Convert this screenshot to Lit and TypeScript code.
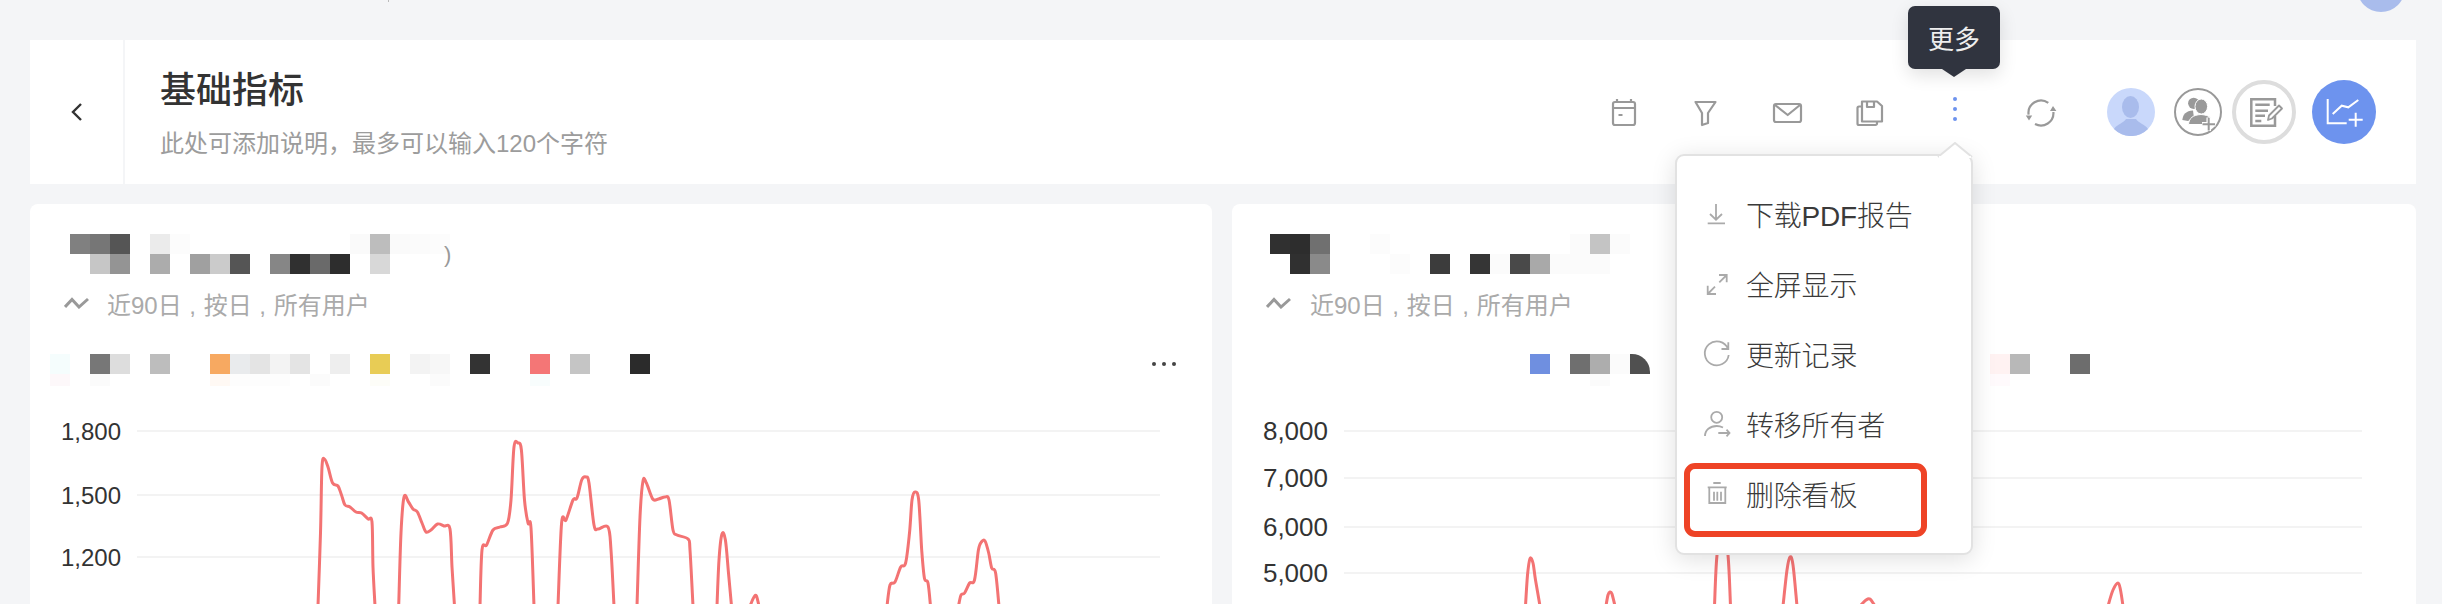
import { LitElement, html, css, svg } from "lit";
import { customElement } from "lit/decorators.js";

type Pt = [number, number];

function smooth(p: Pt[]): string {
  let d = `M${p[0][0]} ${p[0][1]}`;
  for (let i = 0; i < p.length - 1; i++) {
    const a = p[Math.max(0, i - 1)], b = p[i], c = p[i + 1], e = p[Math.min(p.length - 1, i + 2)];
    const c1x = b[0] + (c[0] - a[0]) / 6, c1y = b[1] + (c[1] - a[1]) / 6;
    const c2x = c[0] - (e[0] - b[0]) / 6, c2y = c[1] - (e[1] - b[1]) / 6;
    d += `C${c1x.toFixed(1)} ${c1y.toFixed(1)} ${c2x.toFixed(1)} ${c2y.toFixed(1)} ${c[0]} ${c[1]}`;
  }
  return d;
}

const leftPeaks: Pt[][] = [
  [[318,606],[320.5,533],[322,467],[324.5,459],[328,467],[332.6,483],[338,486],[341.5,495],[345,505],[350,507],[356,512],[361.6,513],[368,519],[372,522],[373,567],[375,606]],
  [[398.7,606],[401,533],[404,497],[408.5,502],[413,509],[417.4,512],[422,523],[426,532],[431,530],[437.5,524],[444,526],[450,529],[452,567],[454.5,606]],
  [[480,606],[482,550],[486.6,545],[493,530],[500,527],[507.6,523],[511,500],[514,447],[518,443],[521.4,450],[524.5,500],[528,523],[531,528],[534,606]],
  [[558,606],[561.6,523],[566,520],[573,500],[577,498],[581.7,480],[586,477],[589,483],[594,525],[598,529],[608,527],[611,550],[614,606]],
  [[637,606],[640,517],[643,481],[646.4,483],[652.7,499],[658.5,499],[665,497],[669,500],[673,530],[677,535],[688,539],[690,550],[693,606]],
  [[717,606],[719,560],[722,534],[725.4,540],[728.5,573],[731.5,606]],
  [[750,606],[754,597],[756.4,596],[759,606]],
  [[887,606],[890,585],[895,582],[900.7,567],[905.6,563],[909.5,533],[912,500],[915,492],[918.7,500],[921.7,550],[924.4,578],[928,583],[930.5,606]],
  [[958.5,606],[961,595],[964.6,593],[969.6,583],[974.5,580],[978.4,550],[981.4,542],[985,541],[988.7,553],[991.7,568],[995.6,573],[999,606]],
];

const rightPeaks: Pt[][] = [
  [[1525.5,606],[1527.5,575],[1530,558.5],[1533,563],[1535.5,580],[1540,606]],
  [[1606,606],[1608,595],[1610,592],[1612,594],[1615,606]],
  [[1714.5,606],[1717,555],[1723,520],[1728,555],[1730.5,606]],
  [[1783,606],[1787,570],[1790,557],[1793,565],[1797,606]],
  [[1860,606],[1866,600],[1870,599],[1875,606]],
  [[2108,606],[2113,590],[2118,583],[2120.5,590],[2123,606]],
];

interface Axis { label: string; y: number }
const leftAxis: Axis[] = [{ label: "1,800", y: 431 }, { label: "1,500", y: 495 }, { label: "1,200", y: 557 }];
const rightAxis: Axis[] = [{ label: "8,000", y: 431 }, { label: "7,000", y: 478 }, { label: "6,000", y: 527 }, { label: "5,000", y: 573 }];

/* Mosaic cells (20px wide): column index -> colour */
type Cells = Record<number, string>;
const titleA: Cells[] = [
  { 0: "#808080", 1: "#767676", 2: "#555555", 4: "#ebebeb", 5: "#fcfcfc", 14: "#fafafa", 15: "#bdbdbd", 16: "#fafafa", 17: "#fbfbfb", 18: "#fcfcfc" },
  { 1: "#c6c6c6", 2: "#949494", 4: "#acacac", 6: "#a0a0a0", 7: "#cbcbcb", 8: "#555555", 10: "#868686", 11: "#303030", 12: "#6a6a6a", 13: "#2d2d2d", 15: "#d8d8d8" },
];
const titleB: Cells[] = [
  { 0: "#303030", 1: "#2d2d2d", 2: "#707070", 5: "#fcfcfc", 15: "#fbfbfb", 16: "#c4c4c4", 17: "#fbfbfb" },
  { 1: "#303030", 2: "#8a8a8a", 6: "#fcfcfc", 8: "#3c3c3c", 10: "#353535", 11: "#fbfbfb", 12: "#494949", 13: "#a9a9a9", 14: "#fbfbfb", 15: "#fbfbfb", 16: "#fbfbfb" },
];
const legendA: Cells[] = [
  { 0: "#f5fdfd", 2: "#777777", 3: "#dddddd", 5: "#bdbdbd", 8: "#f7a961", 9: "#e9ebed", 10: "#e4e4e4", 11: "#f3f3f3", 12: "#e4e4e4", 14: "#eeeeee", 16: "#e8cc55", 18: "#f3f3f3", 19: "#f7f7f7", 21: "#333333", 24: "#f47676", 26: "#c5c5c5", 29: "#2b2b2b" },
  { 0: "#fdf8fa", 2: "#fbfbfb", 8: "#fff9f4", 9: "#fdfdfd", 10: "#fdfdfd", 11: "#fdfdfd", 13: "#fbfbfb", 16: "#fdfdf8", 19: "#fbfbfb", 24: "#f8fdfd" },
];
const legendB: Cells[] = [
  { 0: "#6f8fe0", 2: "#6f6f6f", 3: "#adadad", 4: "#fbfbfb", 5: "#505050", 23: "#fff2f2", 24: "#b8b8b8", 27: "#6d6d6d" },
  { 3: "#fbfbfb", 23: "#fffafc" },
];

const toolbarIcons = [
  svg`<rect x="10" y="10" width="22" height="23" rx="2"/><path d="M14 7v3M28 7v3M10 16h22M15.5 23h4"/>`,
  svg`<path d="M10.5 10H30.5L23 21V31L17 33V21Z"/>`,
  svg`<rect x="7" y="12" width="27" height="18" rx="2"/><path d="M8 13L20.7 23L33 13"/>`,
  svg`<path d="M13 9.5H28L33 14V29.5H13ZM18 9.5V15H25V9.5M13 14.5H10A1.5 1.5 0 0 0 8.5 16V31.5A1.5 1.5 0 0 0 10 33H26.5A1.5 1.5 0 0 0 28 31.5V29.5"/>`,
];

const menu = [
  { label: "下载PDF报告", icon: svg`<path d="M15 6V21M9 16L15 21.7L21 16M6.7 25.3H24"/>` },
  { label: "全屏显示", icon: svg`<path d="M18 7H25.7V14.3M25.7 7L18.3 14.3M6.7 17.7V26H15M6.7 26L14 18.7"/>` },
  { label: "更新记录", icon: svg`<path d="M27.3 4.3V11H20.5M27 11A12 12 0 1 0 27.7 17"/>` },
  { label: "转移所有者", icon: svg`<circle cx="15.7" cy="9.3" r="5.5"/><path d="M4 28C4 22 9 18 15.7 18C18 18 20 18.5 22 19.5M17.3 25H28.3M25.5 21.7L28.5 25L25.5 28.3"/>` },
  { label: "删除看板", icon: svg`<path d="M6.7 9.3H25.7M12.3 5H19.7M8.3 9.3V25H24.3V9.3M13 13.7V22.7M16.3 13.7V22.7M20 13.7V22.7"/>` },
];

@customElement("app-root")
export class AppRoot extends LitElement {
  static styles = css`
    :host {
      display: block;
      position: relative;
      width: 2442px;
      height: 604px;
      overflow: hidden;
      background: #f4f5f7;
      font-family: "Liberation Sans", "Noto Sans CJK SC", sans-serif;
      color: #333333;
    }
    .page { padding: 40px 26px 0 30px; }
    .header {
      height: 144px;
      display: flex;
      align-items: center;
      background: #ffffff;
      padding-right: 40px;
      margin-bottom: 20px;
    }
    .back {
      width: 93px;
      height: 100%;
      flex: none;
      display: flex;
      align-items: center;
      justify-content: center;
      border-right: 2px solid #f4f5f7;
    }
    .back svg { width: 14px; height: 20px; fill: none; stroke: #333333; stroke-width: 2.4; }
    .heading { padding: 3px 0 0 35px; flex: 1; }
    .heading h1 {
      margin: 0;
      font-size: 36px;
      line-height: 50px;
      font-weight: 500;
      color: #333333;
    }
    .heading p {
      margin: 11px 0 0;
      font-size: 24px;
      line-height: 34px;
      color: #9c9c9c;
    }
    .tools { display: flex; align-items: center; gap: 42px; }
    .tool { width: 40px; height: 40px; fill: none; stroke: #999999; stroke-width: 2.2; stroke-linejoin: round; flex: none; display: block; }
    .tool.after { margin-left: 4px; }
    .dots { fill: #6d93ee; stroke: none; }
    .refresh-fill { fill: #999999; stroke: none; }
    .actions { display: flex; align-items: center; margin-left: 46px; }
    .actions svg { display: block; flex: none; }
    .a48 { width: 48px; height: 48px; }
    .a64 { width: 64px; height: 64px; }
    .ml19 { margin-left: 19px; }
    .ml10 { margin-left: 10px; }
    .ml16 { margin-left: 16px; }

    .cards { display: grid; grid-template-columns: 1182px 1184px; gap: 20px; }
    .card {
      height: 420px;
      background: #ffffff;
      border-radius: 8px;
      padding-top: 30px;
      box-sizing: border-box;
      overflow: hidden;
    }
    .mosaic { position: relative; height: 40px; }
    .a .mosaic { margin-left: 40px; }
    .b .mosaic { margin-left: 38px; }
    .m-row { display: flex; height: 20px; }
    .cell { width: 20px; height: 100%; flex: none; display: block; }
    .paren {
      position: absolute;
      left: 374px;
      top: 3px;
      font-size: 22px;
      line-height: 36px;
      color: #999999;
    }
    .sub {
      display: flex;
      align-items: center;
      height: 30px;
      margin: 14px 0 0 34px;
      font-size: 24px;
      color: #aaaaaa;
      white-space: pre;
      word-spacing: 1px;
    }
    .sub svg { width: 25px; height: 12px; fill: none; stroke: #999999; stroke-width: 3; margin-right: 18px; flex: none; }
    .b .sub svg { margin-right: 19px; }
    .legend {
      display: flex;
      justify-content: space-between;
      align-items: flex-start;
      height: 40px;
      margin-top: 36px;
      padding-right: 35px;
    }
    .a .legend { padding-left: 20px; }
    .b .legend { padding-left: 298px; }
    .legend .m-row:last-child { height: 12px; }
    .b .legend .m-row:first-child .cell:nth-child(6) { border-top-right-radius: 18px; }
    .ell { width: 26px; height: 20px; fill: #444444; display: block; }
    .chart { display: block; width: 100%; height: 210px; }
    .grid { stroke: #f3f3f3; stroke-width: 2; }
    .series { fill: none; stroke: #f37373; stroke-width: 3; stroke-linejoin: round; }
    .tick { font-size: 24px; fill: #333333; text-anchor: end; dominant-baseline: central; }
    .b .tick { font-size: 26px; }

    .tooltip {
      position: absolute;
      left: 1908px;
      top: 6px;
      width: 92px;
      height: 63px;
      border-radius: 7px;
      background: #30343f;
      color: #eeeeee;
      font-size: 26px;
      display: flex;
      align-items: center;
      justify-content: center;
      box-shadow: 0 6px 18px rgba(0, 0, 0, 0.12);
    }
    .tooltip::after {
      content: "";
      position: absolute;
      left: 34px;
      top: 63px;
      border-left: 12px solid transparent;
      border-right: 12px solid transparent;
      border-top: 8px solid #30343f;
    }
    .popup {
      position: absolute;
      left: 1675px;
      top: 154px;
      width: 298px;
      height: 401px;
      box-sizing: border-box;
      padding: 23px 0;
      background: #ffffff;
      border: 2px solid #e2e2e2;
      border-radius: 9px;
      box-shadow: 0 4px 24px rgba(0, 0, 0, 0.13);
    }
    .caret {
      position: absolute;
      left: 260px;
      top: -14px;
      width: 36px;
      height: 16px;
      fill: #ffffff;
      stroke: #e2e2e2;
      stroke-width: 2;
    }
    .item {
      height: 70px;
      display: flex;
      align-items: center;
      padding-left: 24px;
      font-size: 28px;
      font-weight: 300;
      color: #3a3a3a;
      letter-spacing: -0.2px;
    }
    .item svg { width: 32px; height: 32px; margin-right: 13px; fill: none; stroke: #aaaaaa; stroke-width: 1.8; flex: none; }
    .mark {
      position: absolute;
      left: 7px;
      top: 307px;
      width: 243px;
      height: 74px;
      box-sizing: border-box;
      border: 6px solid #ee4326;
      border-radius: 11px;
    }
    .corner-avatar {
      position: absolute;
      left: 2357px;
      top: -36px;
      width: 48px;
      height: 48px;
      border-radius: 50%;
      background: #a9bcec;
    }
    .top-tick {
      position: absolute;
      left: 388px;
      top: 0;
      width: 1px;
      height: 2px;
      background: #bbbbbb;
    }
  `;

  private cells(rows: Cells[]) {
    return rows.map((r) => {
      const max = Math.max(...Object.keys(r).map(Number));
      const list = Array.from({ length: max + 1 }, (_, i) => r[i] ?? "transparent");
      return html`<div class="m-row">${list.map((c) => html`<i class="cell" style="background:${c}"></i>`)}</div>`;
    });
  }

  private chart(left: number, width: number, x1: number, x2: number, labelX: number, axis: Axis[], peaks: Pt[][]) {
    return html`<svg class="chart" viewBox="${left} 394 ${width} 210">
      ${axis.map((a) => svg`
        <line class="grid" x1=${x1} x2=${x2} y1=${a.y} y2=${a.y}></line>
        <text class="tick" x=${labelX} y=${a.y}>${a.label}</text>`)}
      ${peaks.map((p) => svg`<path class="series" d=${smooth(p)}></path>`)}
    </svg>`;
  }

  private card(kind: "a" | "b") {
    const a = kind === "a";
    return html`<section class="card ${kind}">
      <div class="mosaic">
        ${this.cells(a ? titleA : titleB)}
        ${a ? html`<span class="paren">)</span>` : ""}
      </div>
      <div class="sub">
        <svg viewBox="0 0 25 12"><path d="M1 10L8 2.5L15 10L24 2"/></svg>
        <span>近90日 , 按日 , 所有用户</span>
      </div>
      <div class="legend">
        <div>${this.cells(a ? legendA : legendB)}</div>
        ${a ? html`<svg class="ell" viewBox="0 0 26 20"><circle cx="3" cy="10" r="2"/><circle cx="13" cy="10" r="2"/><circle cx="23" cy="10" r="2"/></svg>` : ""}
      </div>
      ${a
        ? this.chart(30, 1182, 137, 1160, 121, leftAxis, leftPeaks)
        : this.chart(1232, 1184, 1344, 2362, 1328, rightAxis, rightPeaks)}
    </section>`;
  }

  render() {
    return html`
      <div class="page">
        <header class="header">
          <div class="back"><svg viewBox="0 0 14 20"><path d="M11 2L3 10L11 18"/></svg></div>
          <div class="heading">
            <h1>基础指标</h1>
            <p>此处可添加说明，最多可以输入120个字符</p>
          </div>
          <div class="tools">
            ${toolbarIcons.map((i) => html`<svg class="tool" viewBox="0 0 40 40">${i}</svg>`)}
            <svg class="tool after" viewBox="0 0 40 40"><g class="dots"><circle cx="20" cy="7" r="2"/><circle cx="20" cy="17" r="2"/><circle cx="20" cy="27" r="2"/></g></svg>
            <svg class="tool after" viewBox="0 0 40 40">
              <path d="M27.3 10.9A12.5 12.5 0 0 0 7.6 22.7M32.4 20A12.5 12.5 0 0 1 14 32"/>
              <path class="refresh-fill" d="M4.8 23.5H11.2L8 28.5ZM29 19H35.4L32 14Z"/>
            </svg>
          </div>
          <div class="actions">
            <svg class="a48" viewBox="0 0 48 48">
              <circle cx="24" cy="24" r="24" fill="#c9d8fb"/>
              <ellipse cx="23.5" cy="19" rx="8.5" ry="11" fill="#a9bcec"/>
              <path d="M7 41C10 36 17 35 19 31L29 31C31 35 38 36 41 41A24 24 0 0 1 7 41Z" fill="#a9bcec"/>
            </svg>
            <svg class="a48 ml19" viewBox="0 0 48 48">
              <circle cx="24" cy="24" r="23" fill="#ffffff" stroke="#999999" stroke-width="2"/>
              <circle cx="19.7" cy="15.3" r="5.6" fill="#999999"/>
              <path d="M8.3 32C9 26 12 23 19 22.5L20 30L14 33Z" fill="#999999"/>
              <ellipse cx="27.3" cy="18.5" rx="6.3" ry="7.5" stroke="#ffffff" stroke-width="1" fill="#999999"/>
              <path d="M14.5 36.5C15 30 19 27 27 26.5C33 27 36 28.5 37 31L30 36.5Z" fill="#999999" stroke="#ffffff" stroke-width="1"/>
              <path d="M34.7 29.5V43M28 36.3H41.5" stroke="#ffffff" stroke-width="4.5"/>
              <path d="M34.7 30V42.5M28.5 36.3H41" stroke="#999999" stroke-width="2"/>
            </svg>
            <svg class="a64 ml10" viewBox="0 0 64 64">
              <circle cx="32" cy="32" r="30" fill="#ffffff" stroke="#dddddd" stroke-width="4"/>
              <path d="M43 26V19.2H19.3V45.7H43V36" fill="none" stroke="#999999" stroke-width="2.5"/>
              <path d="M23.3 24.7H37.7M23.3 30.7H36M23.3 35.7H33M23.3 41H29.3" fill="none" stroke="#999999" stroke-width="2.4"/>
              <path d="M47 25.5L50 28.5L40 38.5L36 40L37 35.5Z" fill="#ffffff" stroke="#999999" stroke-width="1.8" stroke-linejoin="round"/>
            </svg>
            <svg class="a64 ml16" viewBox="0 0 64 64">
              <circle cx="32" cy="32" r="32" fill="#6d93ee"/>
              <path d="M15.7 19V43.3H34.7M20.7 34L29.7 25.7L36.3 27.3L46.3 20M36.7 39.7H50.7M43.7 32.7V46.7" fill="none" stroke="#ffffff" stroke-width="2"/>
            </svg>
          </div>
        </header>
        <div class="cards">
          ${this.card("a")}
          ${this.card("b")}
        </div>
      </div>

      <div class="corner-avatar"></div>
      <div class="top-tick"></div>
      <div class="tooltip">更多</div>
      <div class="popup">
        <svg class="caret" viewBox="0 0 36 16"><path d="M1 15L18 1L35 15"/><path d="M2 16H34" stroke="#ffffff" stroke-width="4"/></svg>
        ${menu.map((m) => html`<div class="item"><svg viewBox="0 0 32 32">${m.icon}</svg><span>${m.label}</span></div>`)}
        <div class="mark"></div>
      </div>
    `;
  }
}
